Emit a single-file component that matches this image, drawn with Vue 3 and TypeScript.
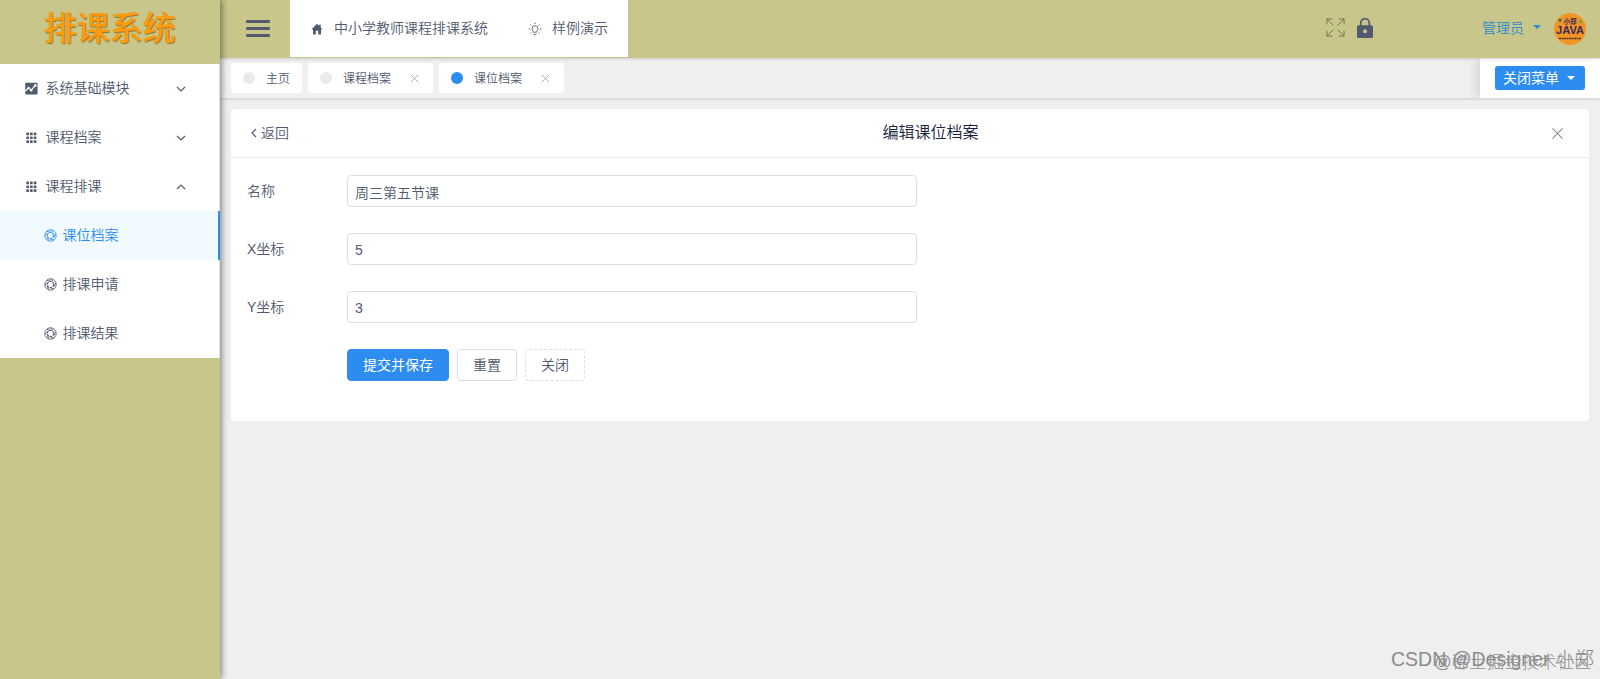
<script setup lang="ts">
import { ref } from 'vue'

interface MenuItem { label: string; icon: 'chart' | 'grid'; open: boolean }
interface Tab { label: string; active: boolean; closable: boolean }
interface Field { label: string; value: string }

const menus: MenuItem[] = [
  { label: '系统基础模块', icon: 'chart', open: false },
  { label: '课程档案', icon: 'grid', open: false },
  { label: '课程排课', icon: 'grid', open: true },
]
const children: string[] = ['课位档案', '排课申请', '排课结果']
const activeChild = ref('课位档案')
const tabs: Tab[] = [
  { label: '主页', active: false, closable: false },
  { label: '课程档案', active: false, closable: true },
  { label: '课位档案', active: true, closable: true },
]
const fields = ref<Field[]>([
  { label: '名称', value: '周三第五节课' },
  { label: 'X坐标', value: '5' },
  { label: 'Y坐标', value: '3' },
])
</script>

<template>
  <div class="app">
    <aside class="side">
      <div class="logo"><span>排课系统</span></div>
      <nav class="menu">
        <div v-for="m in menus" :key="m.label" class="item">
          <svg v-if="m.icon === 'chart'" class="mi" viewBox="0 0 13 13">
            <rect x="0.2" y="0.8" width="12.4" height="11.6" rx="1" fill="#515a6e" />
            <path d="M0 9.3 3.6 5.8 6 8.3 10.7 3" fill="none" stroke="#fff" stroke-width="1.2" />
            <circle cx="3.6" cy="5.8" r="1.1" fill="#fff" /><circle cx="6.2" cy="8.3" r="1.2" fill="#fff" /><circle cx="10.4" cy="3.4" r="1.3" fill="#fff" />
          </svg>
          <svg v-else class="mi" viewBox="0 0 13 13" fill="#515a6e">
            <template v-for="r in 3" :key="r">
              <rect v-for="c in 3" :key="c" :x="c * 3.7 - 2.4" :y="r * 3.9 - 2.4" width="2.7" height="2.7" rx=".5" />
            </template>
          </svg>
          <span class="name">{{ m.label }}</span>
          <svg class="chev" viewBox="0 0 10 10"><path :d="m.open ? 'M1 8 5 4 9 8' : 'M1 4 5 8 9 4'" /></svg>
        </div>
        <div v-for="c in children" :key="c" class="sub" :class="{ on: c === activeChild }" @click="activeChild = c">
          <svg class="ap" viewBox="0 0 13 13">
            <circle cx="6.5" cy="6.5" r="5.7" />
            <circle cx="6.5" cy="6.5" r="3.2" stroke-width="1.2" stroke-dasharray="2.5 .85" />
            <path d="M6.5 1 9 3.3M11.5 5 10.2 8M10 11 6.8 10.2M4.5 11.7 3.6 8.7M1.1 7.3 3.3 5M3 2.3 6 3.2" />
          </svg>
          <span>{{ c }}</span>
        </div>
      </nav>
    </aside>

    <section class="main">
      <header class="head">
        <div class="burger"><i></i><i></i><i></i></div>
        <div class="topnav">
          <svg class="home" viewBox="0 0 12 12" fill="#515a6e"><path d="M6 .8 0.4 6.4H2V11.4H4.8V7.8H7.2V11.4H10V6.4H11.6L9.7 4.5V1.6H8.2V3Z" /></svg>
          <span>中小学教师课程排课系统</span>
          <svg class="bulb" viewBox="0 0 14 14" fill="none" stroke="#515a6e">
            <path d="M5.4 10.2C5.4 9 4.1 8.6 4.1 6.700a2.900 2.900 0 0 1 5.800 0C9.900 8.600 8.600 9 8.600 10.200ZM5.600 12.600H8.400M7 .6V2.100M.6 7H2.200M11.800 7H13.400M2.400 2.400 3.500 3.500M11.600 2.400 10.500 3.500M2.400 11.600 3.500 10.500M11.600 11.600 10.500 10.500" />
          </svg>
          <span>样例演示</span>
        </div>
        <div class="tools">
          <svg class="full" viewBox="0 0 20 20"><path d="M1 6.500V1H6.500M1 1 7.800 7.800M13.500 1H19V6.500M19 1 12.200 7.800M1 13.500V19H6.500M1 19 7.800 12.200M13.500 19H19V13.500M19 19 12.200 12.200" /></svg>
          <svg class="lock" viewBox="0 0 16 20"><path d="M3.700 8V5a4.300 4.300 0 0 1 8.600 0V8" fill="none" stroke="#515a6e" stroke-width="1.700" /><rect y="7.300" width="16" height="12.700" rx="1.500" fill="#515a6e" /><circle cx="8" cy="13.300" r="2" fill="#c7c58b" /></svg>
          <span class="user">管理员</span>
          <i class="caret"></i>
          <svg class="avatar" viewBox="0 0 32 32">
            <circle cx="16" cy="16" r="16" fill="#f39429" />
            <path d="m4 6 4 0-2 4Z" fill="#34763d" /><circle cx="26.500" cy="8.500" r="2" fill="#8ba33b" />
            <text x="16" y="10.500" font-size="6.500">小郑</text>
            <text x="16" y="21" font-size="10.500" textLength="28" lengthAdjust="spacingAndGlyphs">JAVA</text>
            <path d="M5 25.500H27" stroke="#57372d" stroke-width="1.500" stroke-dasharray="2 .5" />
          </svg>
        </div>
      </header>

      <div class="tabs">
        <div v-for="t in tabs" :key="t.label" class="tab">
          <i class="dot" :class="{ on: t.active }"></i>
          <span>{{ t.label }}</span>
          <svg v-if="t.closable" viewBox="0 0 10 10"><path d="M1 1 9 9M9 1 1 9" /></svg>
        </div>
        <div class="closer"><button>关闭菜单<i class="caret"></i></button></div>
      </div>

      <main class="card">
        <div class="cardhead">
          <a class="back"><svg viewBox="0 0 6 10"><path d="M5 1 1 5 5 9" /></svg>返回</a>
          <h1>编辑课位档案</h1>
          <svg class="x" viewBox="0 0 12 12"><path d="M.5.500 11.500 11.500M11.500.500.500 11.500" /></svg>
        </div>
        <form @submit.prevent>
          <label v-for="f in fields" :key="f.label" class="row">
            <span>{{ f.label }}</span>
            <input v-model="f.value" type="text" />
          </label>
          <div class="acts">
            <button class="primary">提交并保存</button>
            <button>重置</button>
            <button class="dashed">关闭</button>
          </div>
        </form>
      </main>
    </section>
    <div class="mark csdn">CSDN @Designer 小郑</div>
    <div class="mark juejin">@稀土掘金技术社区</div>
  </div>
</template>

<style>
body { margin: 0; overflow: hidden; }
</style>

<style scoped>
* { box-sizing: border-box; }
.app { position: relative; display: flex; width: 1600px; height: 679px; overflow: hidden; background: #efefef; color: #515a6e; font: 350 14px/20px "Liberation Sans", "Noto Sans CJK SC", sans-serif; }
svg { display: block; flex: none; overflow: visible; }
button, input { font: inherit; color: inherit; }
.side { position: relative; z-index: 3; flex: none; width: 220px; background: #c8c68a; box-shadow: 2px 0 6px rgba(0, 0, 0, .42); }
.logo { height: 64px; text-align: center; color: #fc9b0d; font: 500 33px/53px "Noto Sans CJK SC", sans-serif; text-shadow: 1px 1px 1px #93742c; }
.logo span { display: inline-block; padding-right: 1px; }
.menu { background: #fff; border-right: 1px solid #dcdee2; }
.item { display: flex; align-items: center; height: 49px; padding: 0 33px 1px 24.500px; }
.mi { width: 13px; height: 13px; margin: 1px 8px 0 0; }
.name { flex: 1; }
.chev { width: 10px; height: 10px; fill: none; stroke: #515a6e; stroke-width: 1.200; }
.sub { display: flex; align-items: center; height: 49px; padding: 0 0 2px 43.500px; }
.sub.on { margin-right: -1px; color: #2d8cf0; background: #f0faff; border-right: 2px solid #2d8cf0; }
.ap { width: 13px; height: 13px; margin: 2px 6px 0 0; fill: none; stroke: currentColor; stroke-width: .9; }
.main { flex: 1; min-width: 0; }
.head { position: relative; z-index: 2; display: flex; height: 58px; background: #c8c68a; box-shadow: 0 1px 3px rgba(0, 0, 0, .16); }
.burger { display: flex; flex-direction: column; gap: 4px; width: 70px; padding: 20px 0 0 26px; }
.burger i { width: 24px; height: 3px; background: #515a6e; border-radius: 1px; }
.topnav { display: flex; align-items: center; width: 338px; height: 57px; padding: 0 0 1px 21px; background: #fff; }
.home { width: 12px; height: 12px; margin: 2px 11px 0 0; }
.bulb { width: 14px; height: 14px; margin: 2px 10px 0 40px; stroke-width: .9; }
.tools { display: flex; align-items: center; margin-left: auto; padding: 0 14px 3px 0; }
.full { width: 19px; height: 19px; margin-right: 12px; fill: none; stroke: #64694f; stroke-width: .9; }
.lock { width: 16px; height: 20px; margin-right: 109px; }
.user { color: #2d8cd0; }
.caret { display: inline-block; width: 0; height: 0; border: 4px solid transparent; border-top-color: currentColor; border-bottom: 0; }
.tools .caret { margin: 0 13px 2px 9px; color: #2d8cd0; }
.avatar { width: 32px; height: 32px; margin-top: 2px; }
.avatar text { font-family: "Liberation Sans", "Noto Sans CJK SC", sans-serif; font-weight: 700; fill: #382b54; text-anchor: middle; }
.tabs { display: flex; align-items: center; gap: 6px; height: 40px; padding-left: 11px; background: #f0f0f0; box-shadow: 0 1px 2px 1px rgba(0, 0, 0, .1); font-size: 12px; }
.tab { display: flex; align-items: center; height: 30px; padding: 0 12px; background: #fff; border-radius: 3px; }
.tab span { padding-top: 2px; }
.dot { width: 12px; height: 12px; margin-right: 11px; background: #e8eaec; border-radius: 50%; }
.dot.on { background: #2d8cf0; }
.tab svg { width: 9px; height: 9px; margin: 1px 2px 0 19px; stroke: #aaa; stroke-width: 1; }
.closer { display: flex; align-items: center; justify-content: center; width: 120px; height: 40px; margin-left: auto; background: #fff; box-shadow: -3px 0 12px rgba(0, 0, 0, .13); clip-path: inset(0 0 0 -20px); }
.closer button { display: flex; align-items: center; justify-content: center; width: 90px; height: 24px; padding: 0 2px 0 0; margin-top: -1px; color: #fff; background: #2d8cf0; border: 0; border-radius: 3px; font-size: 14px; font-weight: 400; }
.closer .caret { margin-left: 8px; }
.card { width: 1358px; height: 312px; margin: 11px 0 0 11px; background: #fff; border-radius: 3px; }
.cardhead { display: grid; grid-template-columns: 1fr auto 1fr; align-items: center; height: 49px; padding: 0 26px 0 20px; border-bottom: 1px solid #e8eaec; }
.back { display: flex; align-items: center; gap: 4px; }
.back svg { width: 6px; height: 10px; fill: none; stroke: #515a6e; stroke-width: 1.200; }
h1 { margin: 0 -5px 0 42px; color: #17233d; font-size: 16px; font-weight: 350; line-height: 20px; }
.x { justify-self: end; width: 11px; height: 11px; stroke: #888; stroke-width: 1.100; }
form { padding: 17px 16px; }
.row { display: flex; align-items: center; height: 32px; margin-bottom: 26px; }
.row span { width: 100px; }
input { width: 570px; height: 32px; padding: 1px 7px 0; background: #fff; border: 1px solid #dcdee2; border-radius: 4px; outline: 0; }
.acts { display: flex; gap: 8px; padding-left: 100px; }
.acts button { width: 60px; height: 32px; padding: 0; background: #fff; border: 1px solid #dcdee2; border-radius: 4px; }
.acts .primary { width: 102px; color: #fff; background: #2d8cf0; border-color: #2d8cf0; font-weight: 400; }
.acts .dashed { border-style: dashed; }
.mark { position: absolute; z-index: 5; white-space: nowrap; color: #8b8b8b; font-weight: 300; }
.csdn { left: 1391px; top: 647px; font-size: 19.500px; line-height: 24px; }
.juejin { left: 1434px; top: 650px; font-size: 17.500px; line-height: 24px; color: #929292; }
</style>
